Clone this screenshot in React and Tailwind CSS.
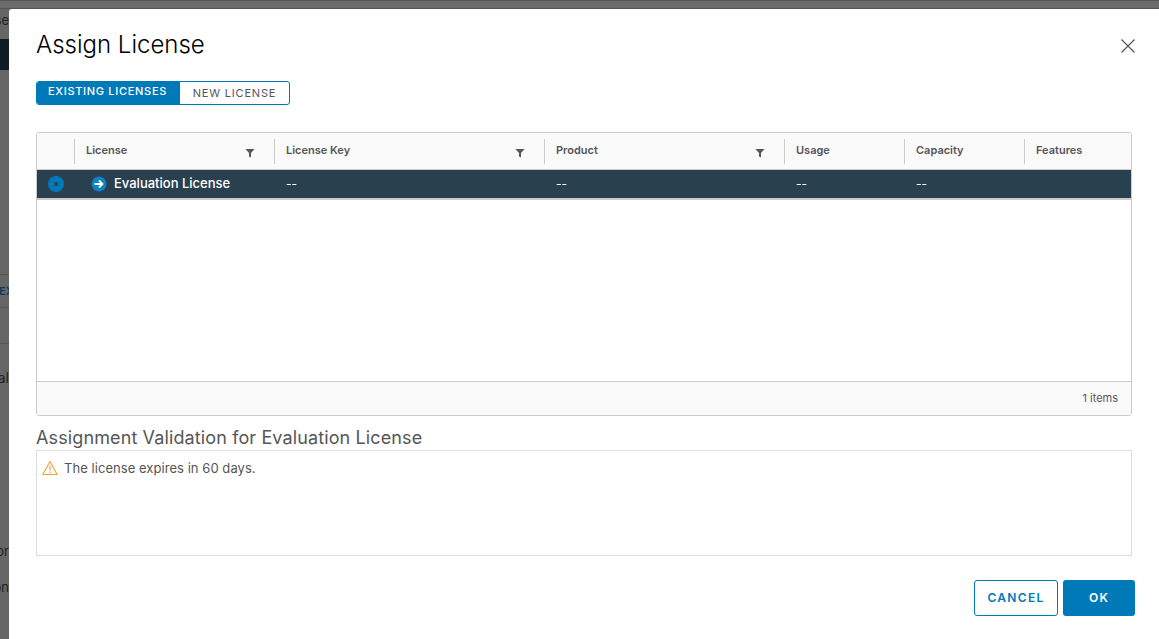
const font = { fontFamily: 'Inter, "Liberation Sans", sans-serif' };

const columns = [
  { label: 'License', width: 'w-[200px]', filter: true, value: 'Evaluation License' },
  { label: 'License Key', width: 'w-[270px]', filter: true, value: '--' },
  { label: 'Product', width: 'w-[240px]', filter: true, value: '--' },
  { label: 'Usage', width: 'w-[120px]', value: '--' },
  { label: 'Capacity', width: 'w-[120px]', value: '--' },
  { label: 'Features', width: 'flex-1', value: '' },
];

function FilterIcon() {
  return (
    <svg width="10" height="10" viewBox="0 0 10 10" className="absolute right-[19px] top-[15px]">
      <path d="M0.5 1h9L6 5v4.5L4 8.5V5z" fill="#565656" />
    </svg>
  );
}

function BackdropStrip() {
  return (
    <div className="w-[9px] shrink-0 overflow-hidden bg-[#666666] text-[13px] leading-[16px] text-[#222222]">
      <div className="flex h-[30px] items-center justify-end whitespace-nowrap pb-[8px]">se</div>
      <div className="h-[31px] bg-[#101c24]" />
      <div className="mt-[204px] h-[34px] border-y border-[#555555] flex items-center text-[#0d3a57] font-semibold whitespace-nowrap">
        <span className="-ml-[1px] text-[11px]">EX</span>
      </div>
      <div className="mt-[35px] h-[1px] bg-[#555555]" />
      <div className="mt-[26px] flex h-[16px] items-center justify-end whitespace-nowrap text-[14px]">al</div>
      <div className="mt-[157px] flex h-[16px] items-center justify-end whitespace-nowrap">or</div>
      <div className="mt-[20px] flex h-[16px] items-center justify-end whitespace-nowrap">on</div>
    </div>
  );
}

function LicenseTable() {
  return (
    <div className="flex h-[284px] flex-col overflow-hidden rounded-[3px] border border-[#cccccc] bg-white">
      <div className="flex h-[37px] shrink-0 border-b border-[#cccccc] bg-[#fafafa]">
        <div className="w-[37px] shrink-0" />
        {columns.map((c) => (
          <div key={c.label} className={`relative ${c.width} h-full`}>
            <div className="absolute left-0 top-[6px] h-[25px] w-px bg-[#cccccc]" />
            <div className="pl-[12px] pt-[9px] text-[11px] font-semibold leading-[16px] text-[#565656]">{c.label}</div>
            {c.filter && <FilterIcon />}
          </div>
        ))}
      </div>

      <div className="flex h-[30px] shrink-0 items-center border-b-2 border-[#cccccc] bg-[#29414f] text-white">
        <div className="flex w-[37px] shrink-0 items-center">
          <div className="ml-[11px] flex h-[16px] w-[16px] items-center justify-center rounded-full bg-[#0079b8]">
            <div className="h-[4px] w-[4px] rounded-full bg-[#29414f]" />
          </div>
        </div>
        {columns.map((c, i) => (
          <div key={c.label} className={`${c.width} flex items-center`}>
            {i === 0 ? (
              <div className="flex items-center pl-[17px]">
                <svg width="16" height="16" viewBox="0 0 16 16">
                  <circle cx="8" cy="8" r="7.5" fill="#0f82c5" />
                  <path d="M3.5 8h8M8 4.5 11.5 8 8 11.5" fill="none" stroke="#ffffff" strokeWidth="1.8" />
                </svg>
                <span className="ml-[7px] text-[13px] font-medium">{c.value}</span>
              </div>
            ) : (
              <span className="pl-[12px] text-[12px]">{c.value}</span>
            )}
          </div>
        ))}
      </div>

      <div className="flex-1" />

      <div className="flex h-[34px] shrink-0 items-center justify-end border-t border-[#cccccc] bg-[#fafafa] pr-[13px] text-[11px] text-[#565656]">
        1 items
      </div>
    </div>
  );
}

export default function App() {
  return (
    <div className="flex h-[639px] w-[1159px] flex-col overflow-hidden bg-[#666666]" style={font}>
      <div className="h-[9px] shrink-0 border-t border-b border-[#555555] bg-[#6b6b6b]" />
      <div className="flex flex-1">
        <BackdropStrip />
        <div className="flex-1 rounded-tl-[3px] bg-white pl-[27px] pr-[27px]">
          <div className="relative flex h-[72px] items-start pt-[20px]">
            <h1 className="text-[24px] font-light leading-[32px] text-black">Assign License</h1>
            <svg width="16" height="16" viewBox="0 0 16 16" className="absolute right-[-4px] top-[29px]">
              <path d="M1.5 1.5l13 13M14.5 1.5l-13 13" stroke="#565656" strokeWidth="1.2" fill="none" />
            </svg>
          </div>

          <div className="flex h-[24px] w-[254px] overflow-hidden rounded-[3px] border border-[#0079b8] text-[11px]">
            <button className="flex w-[143px] justify-center bg-[#0079b8] pt-[2px] pr-[2px] font-medium leading-[14px] tracking-[0.7px] text-white">EXISTING LICENSES</button>
            <button className="flex-1 leading-[16px] tracking-[0.8px] text-[#565656]">NEW LICENSE</button>
          </div>

          <div className="mt-[27px]">
            <LicenseTable />
          </div>

          <h2 className="mt-[11px] h-[23px] text-[18px] font-normal leading-[22px] tracking-[0.12px] text-[#565656]">
            Assignment Validation for Evaluation License
          </h2>

          <div className="flex h-[106px] items-start border border-[#dddddd] pl-[5px] pt-[9px]">
            <svg width="16" height="16" viewBox="0 0 16 16" className="shrink-0">
              <path d="M8 1.5 15.2 14.5H0.8z" fill="none" stroke="#e5a33a" strokeWidth="1.1" strokeLinejoin="round" />
              <path d="M8 5.5v5M8 11.5v1.5" stroke="#e5a33a" strokeWidth="1.2" />
            </svg>
            <span className="ml-[6px] text-[13px] leading-[16px] tracking-[0.05px] text-[#565656]">The license expires in 60 days.</span>
          </div>

          <div className="mr-[-3px] mt-[24px] flex justify-end gap-[5px]">
            <button className="h-[36px] w-[84px] rounded-[3px] border border-[#0079b8] text-[12px] font-semibold tracking-[1.3px] text-[#0079b8]">CANCEL</button>
            <button className="h-[36px] w-[72px] rounded-[3px] bg-[#0079b8] text-[12px] font-semibold tracking-[1.2px] text-white">OK</button>
          </div>
        </div>
      </div>
    </div>
  );
}
